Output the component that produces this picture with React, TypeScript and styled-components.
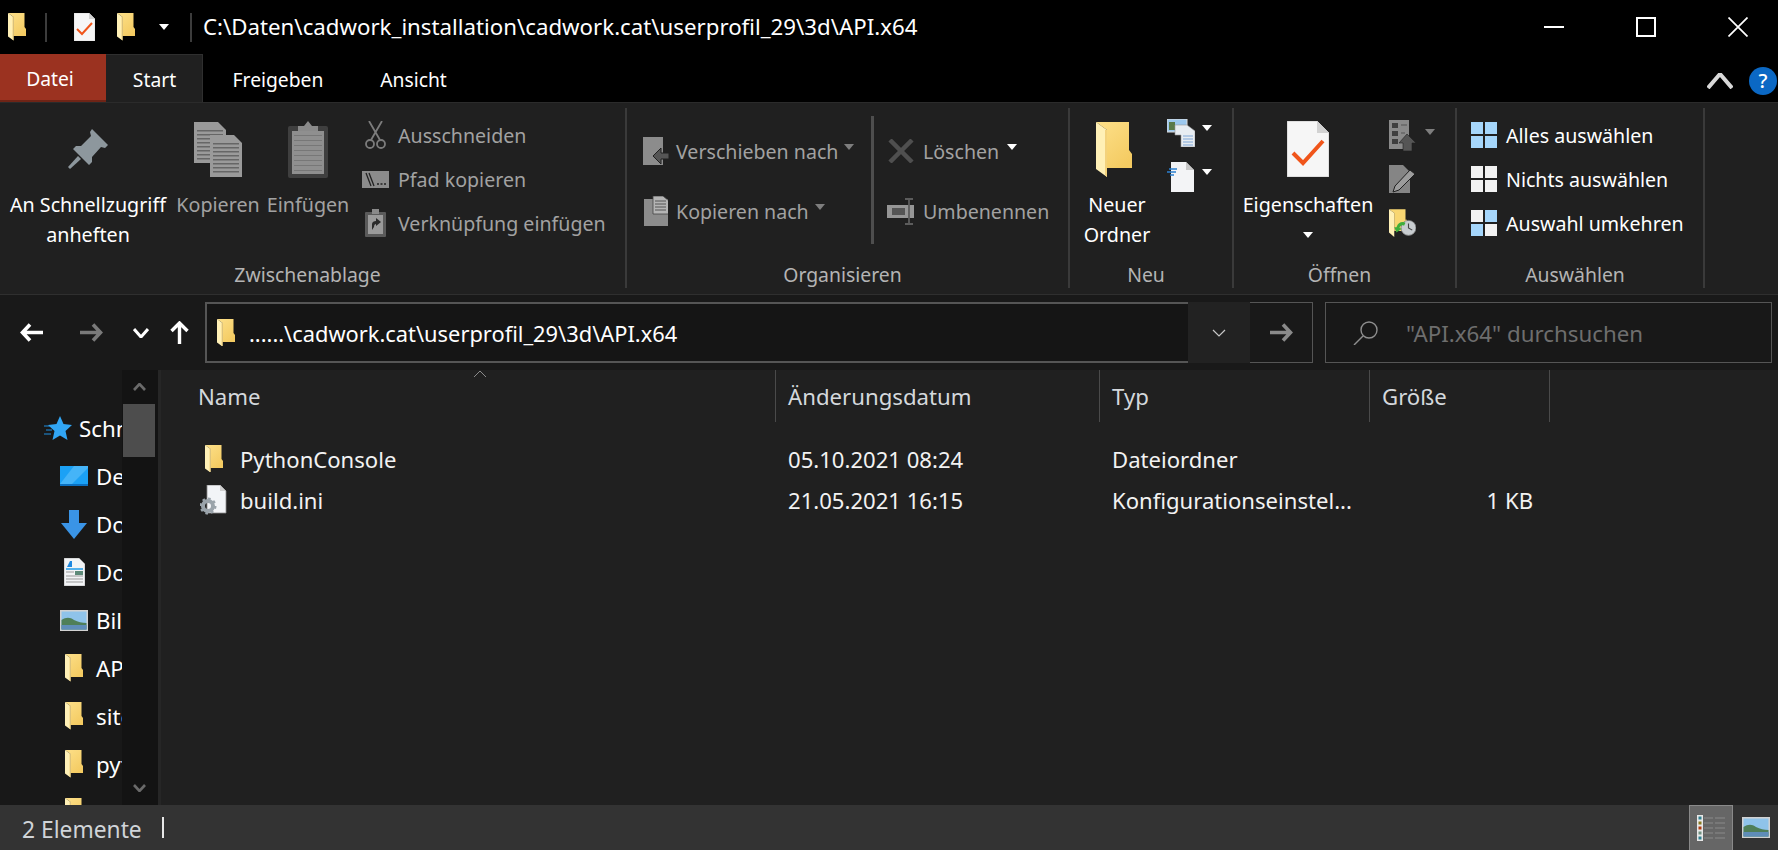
import React from 'react'
import styled, { createGlobalStyle } from 'styled-components'

const GlobalStyle = createGlobalStyle`
  html, body { margin: 0; padding: 0; background: #202020; overflow: hidden; }
  body { font-family: "Noto Sans", "Liberation Sans", sans-serif; color: #fff; }
  svg { display: block; flex-shrink: 0; }
`

const Window = styled.div`
  width: 1778px;
  height: 850px;
  display: flex;
  flex-direction: column;
  overflow: hidden;
`

/* title bar */
const TitleBar = styled.div`
  height: 54px;
  background: #000;
  display: flex;
  align-items: center;
  padding-left: 8px;
`
const QuickSep = styled.div<{ $ml: number; $mr: number }>`
  width: 2px;
  height: 29px;
  background: #3c3c3c;
  margin: 0 ${p => p.$mr}px 0 ${p => p.$ml}px;
`
const QuickSlot = styled.div<{ $w: number }>`
  width: ${p => p.$w}px;
  display: flex;
  justify-content: flex-start;
`
const TitleText = styled.div`
  font-size: 22.25px;
  white-space: nowrap;
  margin-left: 11px;
  margin-bottom: 2px;
  flex: 1;
`
const WinControls = styled.div`
  display: flex;
  align-items: center;
`
const WinButton = styled.div<{ $w: number }>`
  width: ${p => p.$w}px;
  display: flex;
  justify-content: center;
`

/* tabs */
const TabRow = styled.div`
  height: 48px;
  background: #000;
  display: flex;
  align-items: stretch;
`
const Tab = styled.div<{ $w: number; $active?: boolean; $file?: boolean }>`
  width: ${p => p.$w}px;
  box-sizing: border-box;
  display: flex;
  align-items: center;
  justify-content: center;
  font-size: 19.3px;
  padding-top: 2px;
  padding-right: ${p => (p.$file ? 6 : 0)}px;
  background: ${p => (p.$file ? '#9b3220' : p.$active ? '#202020' : 'transparent')};
  border-bottom: ${p => (p.$file ? '2px solid #6f2416' : 'none')};
  border-top: ${p => (p.$active ? '1px solid #2f2f2f' : 'none')};
  box-shadow: ${p => (p.$active ? 'inset -1px 0 0 #2f2f2f' : 'none')};
`
const TabRight = styled.div`
  margin-left: auto;
  display: flex;
  align-items: center;
  gap: 16px;
  padding-right: 1px;
  padding-top: 6px;
`
const HelpBadge = styled.div`
  width: 28px;
  height: 28px;
  border-radius: 50%;
  background: #0b68c4;
  color: #fff;
  font-size: 20px;
  font-weight: 500;
  display: flex;
  align-items: center;
  justify-content: center;
  line-height: 1;
`

/* ribbon */
const Ribbon = styled.div`
  height: 193px;
  box-sizing: border-box;
  background: #202020;
  border-top: 1px solid #2b2b2b;
  border-bottom: 1px solid #2f2f2f;
  padding: 5px 0 6px;
  display: flex;
  align-items: stretch;
`
const Group = styled.div<{ $w: number }>`
  width: ${p => p.$w}px;
  box-sizing: border-box;
  border-right: 2px solid #3a3a3a;
  padding-right: 10px;
  display: flex;
  flex-direction: column;
`
const GroupBody = styled.div<{ $pl: number }>`
  flex: 1;
  display: flex;
  align-items: flex-start;
  padding-left: ${p => p.$pl}px;
  min-height: 0;
`
const GroupLabel = styled.div`
  height: 26px;
  text-align: center;
  font-size: 19.4px;
  line-height: 26px;
  color: #b4b4b4;
`
const LargeButton = styled.div<{ $w: number; $ml?: number; $dim?: boolean }>`
  width: ${p => p.$w}px;
  margin-left: ${p => p.$ml || 0}px;
  flex-shrink: 0;
  display: flex;
  flex-direction: column;
  align-items: center;
  font-size: 19.7px;
  line-height: 30px;
  text-align: center;
  white-space: nowrap;
  color: ${p => (p.$dim ? '#a2a2a2' : '#fff')};
`
const LargeIcon = styled.div<{ $shift?: number }>`
  height: 82px;
  display: flex;
  align-items: center;
  justify-content: center;
  margin-right: ${p => p.$shift || 0}px;
`
const Stack = styled.div<{ $ml?: number; $top: number; $rowH?: number; $w?: number }>`
  margin-left: ${p => p.$ml || 0}px;
  padding-top: ${p => p.$top}px;
  width: ${p => (p.$w ? `${p.$w}px` : 'auto')};
  flex-shrink: 0;
  display: grid;
  grid-auto-rows: ${p => p.$rowH || 44}px;
`
const SmallRow = styled.div<{ $dim?: boolean }>`
  display: flex;
  align-items: center;
  font-size: 19.6px;
  white-space: nowrap;
  color: ${p => (p.$dim ? '#a2a2a2' : '#fff')};
`
const SmallIcon = styled.div<{ $w: number; $mr: number }>`
  width: ${p => p.$w}px;
  margin-right: ${p => p.$mr}px;
  display: flex;
  justify-content: center;
  flex-shrink: 0;
`
const Caret = styled.span<{ $ml?: number; $dim?: boolean; $up?: number; $down?: number }>`
  display: inline-block;
  width: 0;
  height: 0;
  margin-left: ${p => p.$ml || 0}px;
  margin-bottom: ${p => p.$up || 0}px;
  margin-top: ${p => p.$down || 0}px;
  border-left: 5px solid transparent;
  border-right: 5px solid transparent;
  border-top: 6px solid ${p => (p.$dim ? '#7e7e7e' : '#fff')};
`
const OrgDivider = styled.div`
  width: 3px;
  height: 128px;
  background: #4e4e4e;
  margin: 8px 13px 0 0;
  flex-shrink: 0;
`

/* address row */
const NavBar = styled.div`
  height: 75px;
  background: #191919;
  display: flex;
  align-items: center;
`
const NavButton = styled.div<{ $w: number }>`
  width: ${p => p.$w}px;
  display: flex;
  justify-content: center;
`
const Address = styled.div`
  margin-left: 6px;
  width: 1108px;
  height: 61px;
  display: flex;
  font-size: 21.85px;
`
const AddressField = styled.div`
  flex: 1;
  box-sizing: border-box;
  border: 2px solid #555;
  border-right: none;
  background: #151515;
  display: flex;
  align-items: center;
  gap: 14px;
  padding-left: 10px;
`
const AddressText = styled.span`
  padding-top: 1px;
`
const AddressDrop = styled.div`
  width: 62px;
  background: #222;
  display: flex;
  align-items: center;
  justify-content: center;
`
const GoButton = styled.div`
  width: 63px;
  box-sizing: border-box;
  border: 1px solid #555;
  border-left: none;
  display: flex;
  align-items: center;
  justify-content: center;
`
const SearchBox = styled.div`
  margin-left: 12px;
  width: 447px;
  height: 61px;
  box-sizing: border-box;
  border: 1px solid #555;
  background: #181818;
  display: flex;
  align-items: center;
  gap: 27px;
  padding-left: 27px;
  font-size: 22.3px;
  color: #6e6e6e;
`
const SearchText = styled.span`
  padding-top: 1px;
`

/* main */
const Main = styled.div`
  flex: 1;
  min-height: 0;
  display: flex;
`
const Sidebar = styled.div`
  width: 161px;
  box-sizing: border-box;
  background: #181818;
  border-right: 3px solid #262626;
  display: flex;
`
const Tree = styled.div`
  width: 122px;
  overflow: hidden;
  padding-top: 34px;
  box-sizing: border-box;
`
const TreeItem = styled.div<{ $indent: number }>`
  height: 48px;
  display: flex;
  align-items: center;
  gap: 8px;
  padding-left: ${p => p.$indent}px;
  font-size: 22.3px;
  white-space: nowrap;
`
const TreeIcon = styled.div`
  width: 28px;
  display: flex;
  justify-content: center;
  flex-shrink: 0;
`
const ScrollTrack = styled.div`
  flex: 1;
  background: #131313;
  display: flex;
  flex-direction: column;
  padding-right: 3px;
`
const ScrollArrow = styled.div`
  height: 34px;
  display: flex;
  align-items: center;
  justify-content: center;
  padding-left: 1px;
`
const ScrollThumb = styled.div`
  height: 53px;
  background: #4d4d4d;
  margin-left: 1px;
`
const ScrollGap = styled.div`
  flex: 1;
`
const Files = styled.div`
  flex: 1;
  background: #202020;
  min-width: 0;
`
const Columns = styled.div`
  display: grid;
  grid-template-columns: 615px 324px 270px 180px;
`
const HeaderCell = styled.div<{ $pl: number }>`
  position: relative;
  height: 52px;
  box-sizing: border-box;
  border-right: 1px solid #4a4a4a;
  padding-left: ${p => p.$pl}px;
  display: flex;
  align-items: center;
  font-size: 22.2px;
  color: #d4d8dc;
`
const SortMark = styled.div`
  position: absolute;
  left: 312px;
  top: 0;
`
const RowList = styled.div`
  padding-top: 16px;
`
const RowCell = styled.div<{ $pl?: number; $right?: boolean; $gap?: number }>`
  height: 41px;
  display: flex;
  align-items: center;
  gap: ${p => p.$gap || 17}px;
  padding-left: ${p => p.$pl || 0}px;
  padding-right: ${p => (p.$right ? 17 : 0)}px;
  justify-content: ${p => (p.$right ? 'flex-end' : 'flex-start')};
  font-size: 22.1px;
  white-space: nowrap;
  color: #f2f2f2;
`

/* status bar */
const StatusBar = styled.div`
  height: 45px;
  background: #333;
  display: flex;
  align-items: center;
  padding-left: 22px;
  font-size: 22.8px;
  color: #d0d4d8;
`
const StatusText = styled.span`
  padding-top: 3px;
`
const StatusSep = styled.div`
  width: 2px;
  height: 21px;
  background: #e8e8e8;
  margin-left: 20px;
`
const ViewDetails = styled.div`
  margin-left: auto;
  width: 44px;
  height: 45px;
  box-sizing: border-box;
  background: #666;
  border: 1px solid #8a8a8a;
  border-bottom: none;
  display: flex;
  align-items: center;
  justify-content: center;
`
const ViewThumb = styled.div`
  width: 45px;
  display: flex;
  justify-content: center;
`

/* icons */
const Folder = ({ w }: { w: number }) => (
  <svg width={w} height={w * 55 / 36} viewBox="0 0 36 55">
    <defs>
      <linearGradient id="fback" x1="0" y1="0" x2="0.7" y2="1">
        <stop offset="0" stopColor="#fde08a" />
        <stop offset="1" stopColor="#f4cb62" />
      </linearGradient>
    </defs>
    <path d="M0 0H33V28L36 32V46H11V8Z" fill="url(#fback)" />
    <path d="M0 0L11 8V55L0 47Z" fill="#fff0b6" />
    <path d="M11 8V55L9 53V8Z" fill="#f3d27c" />
  </svg>
)

const CheckDoc = ({ w }: { w: number }) => (
  <svg width={w} height={w * 56 / 42} viewBox="0 0 42 56">
    <path d="M0 0H30L42 12V56H0Z" fill="#f6f6f6" stroke="#c8c8c8" strokeWidth="1" />
    <path d="M30 0V12H42Z" fill="#d2d2d2" />
    <path d="M6 32L16 42L36 20" fill="none" stroke="#f0551a" strokeWidth="4" />
  </svg>
)

const Pin = () => (
  <svg width="40" height="40" viewBox="0 0 40 40" fill="#8d979d">
    <path d="M24 0L40 16L37 19L33 18L24 28L24 33L21 36L5 20L8 17L13 17L23 7L22 3Z" />
    <path d="M10 27L13 30L2 40L0 38Z" />
  </svg>
)

const PageLines = ({ x, y, w, h }: { x: number; y: number; w: number; h: number }) => {
  const lines = []
  for (let ly = y + 8; ly < y + h - 3; ly += 4) lines.push(<rect key={ly} x={x + 3} y={ly} width={w - 6} height="1.5" fill="#666" />)
  return (
    <g>
      <path d={`M${x} ${y}H${x + w - 8}L${x + w} ${y + 8}V${y + h}H${x}Z`} fill="#9a9a9a" />
      {lines}
    </g>
  )
}

const CopyIcon = () => (
  <svg width="48" height="55" viewBox="0 0 48 55">
    <PageLines x={0} y={0} w={32} h={41} />
    <PageLines x={16} y={13} w={32} h={42} />
  </svg>
)

const ClipboardIcon = () => (
  <svg width="40" height="57" viewBox="0 0 40 57">
    <rect x="0" y="5" width="40" height="52" rx="2" fill="#3f3f3f" />
    <rect x="4" y="10" width="32" height="43" fill="#8f8f8f" />
    {[14, 19, 24, 29, 34, 39, 44, 49].map(y => <rect key={y} x="6" y={y} width="28" height="1" fill="#777" />)}
    <path d="M20 0L24 5H30V10H10V5H16Z" fill="#8a8a8a" />
  </svg>
)

const Scissors = () => (
  <svg width="21" height="28" viewBox="0 0 21 28" fill="none" stroke="#7c7c7c" strokeWidth="1.8">
    <path d="M4 0L15 19M17 0L6 19" />
    <circle cx="5" cy="23" r="4" />
    <circle cx="16" cy="23" r="4" />
  </svg>
)

const PathIcon = () => (
  <svg width="27" height="17" viewBox="0 0 27 17">
    <rect width="27" height="17" fill="#8c8c8c" />
    <path d="M4 2L9 15M7 2L12 15" stroke="#222" strokeWidth="1.3" />
    <path d="M15 13h2M18.500 13h2M22 13h2" stroke="#222" strokeWidth="1.5" />
  </svg>
)

const LinkClip = () => (
  <svg width="21" height="28" viewBox="0 0 21 28">
    <rect y="3" width="21" height="25" rx="1" fill="#5a5a5a" />
    <rect x="3" y="6" width="15" height="19" fill="#9a9a9a" />
    <rect x="7" y="0" width="7" height="5" fill="#8a8a8a" />
    <path d="M7 21V15C7 13 9 12 11 12V9L16 13L11 17V15C10 15 9 16 9 18Z" fill="#2a2a2a" />
  </svg>
)

const MoveIcon = () => (
  <svg width="26" height="28" viewBox="0 0 26 28">
    <path d="M0 0H20V28H0Z" fill="#8c8c8c" />
    <path d="M10 19L18 11V16H26V22H18V27Z" fill="#555" stroke="#202020" strokeWidth="1" />
  </svg>
)

const CopyToIcon = () => (
  <svg width="24" height="30" viewBox="0 0 24 30">
    <path d="M0 3H24V30H0Z" fill="#8c8c8c" />
    <path d="M9 0H19L25 5V18H9Z" fill="#b5b5b5" stroke="#444" strokeWidth="0.8" />
    <path d="M11 5h11M11 8h11M11 11h11M11 14h11" stroke="#555" strokeWidth="1" />
  </svg>
)

const DeleteX = () => (
  <svg width="26" height="24" viewBox="0 0 26 24">
    <path d="M2 1L24 23M24 1L2 23" stroke="#4f4f4f" strokeWidth="4.5" />
  </svg>
)

const RenameIcon = () => (
  <svg width="28" height="27" viewBox="0 0 28 27">
    <rect x="0" y="7" width="27" height="13" fill="#969696" />
    <rect x="5" y="10" width="13" height="7" fill="#555" />
    <path d="M18 1H26M18 26H26M22 1V26" stroke="#5c5c5c" strokeWidth="1.8" fill="none" />
  </svg>
)

const ContactsIcon = () => (
  <svg width="28" height="28" viewBox="0 0 28 28">
    <rect x="0" y="0" width="20" height="13" fill="#9cc8ee" stroke="#ddd" />
    <rect x="2" y="3" width="6" height="8" fill="#5a7a4a" />
    <path d="M8 6H20L28 12V28H14V16H8Z" fill="#e8edf2" stroke="#999" strokeWidth="0.6" />
    <path d="M16 17h10M16 20h10M16 23h10M16 26h10" stroke="#7ea6d6" strokeWidth="1" />
  </svg>
)

const NewFileIcon = () => (
  <svg width="27" height="30" viewBox="0 0 27 30">
    <path d="M4 0H19L27 8V30H4Z" fill="#f3f4f6" />
    <path d="M19 0V8H27Z" fill="#c8c8c8" />
    <path d="M2 7h8M0 10h9M3 13h4" stroke="#2a7fd0" strokeWidth="1.3" />
  </svg>
)

const ChecklistUp = () => (
  <svg width="27" height="31" viewBox="0 0 27 31">
    <rect width="20" height="29" fill="#8a8a8a" />
    <rect x="3" y="3" width="6" height="5" fill="#3f3f3f" />
    <rect x="3" y="11" width="6" height="5" fill="#3f3f3f" />
    <rect x="3" y="19" width="6" height="5" fill="#3f3f3f" />
    <path d="M12 5h6M12 13h4" stroke="#555" strokeWidth="1" />
    <path d="M18 14L27 23H23V31H14V23H10Z" fill="#555" stroke="#202020" strokeWidth="0.6" />
  </svg>
)

const EditDoc = () => (
  <svg width="27" height="28" viewBox="0 0 27 28">
    <path d="M0 0H14L21 7V28H0Z" fill="#858585" />
    <path d="M6 21L21 5L26 9L10 25L4 27Z" fill="#9c9c9c" stroke="#202020" strokeWidth="1" />
  </svg>
)

const HistoryFolder = () => (
  <svg width="27" height="28" viewBox="0 0 36 37">
    <path d="M0 0H22V14H24V29H7V5Z" fill="#f8d672" />
    <path d="M0 0L7 5V37L0 31Z" fill="#fff0b6" />
    <circle cx="26" cy="25" r="10" fill="#c8cdd0" stroke="#777" strokeWidth="1" />
    <path d="M26 19V25L31 28" stroke="#444" strokeWidth="1.5" fill="none" />
    <path d="M10 24C12 18 17 16 22 18L20 22C17 21 15 22 14 25L17 26L10 31L7 24Z" fill="#3fae3a" />
  </svg>
)

const Grid4 = ({ a, b, c, d }: { a: string; b: string; c: string; d: string }) => (
  <svg width="26" height="26" viewBox="0 0 26 26">
    <rect x="0" y="0" width="12" height="12" fill={a} />
    <rect x="14" y="0" width="12" height="12" fill={b} />
    <rect x="0" y="14" width="12" height="12" fill={c} />
    <rect x="14" y="14" width="12" height="12" fill={d} />
  </svg>
)
const BLUE = '#a5d6fb'
const WHITE = '#f2f2f2'

const Arrow = ({ color, right }: { color: string; right?: boolean }) => (
  <svg width="23" height="19" viewBox="0 0 23 19">
    <path
      d={right ? 'M13 1.500L20.500 9.500L13 17.500M20 9.500H0' : 'M10 1.500L2.500 9.500L10 17.500M3 9.500H23'}
      fill="none"
      stroke={color}
      strokeWidth="3.6"
    />
  </svg>
)

const Chevron = ({ w, h, color, sw, up }: { w: number; h: number; color: string; sw: number; up?: boolean }) => (
  <svg width={w} height={h} viewBox={`0 0 ${w} ${h}`}>
    <path
      d={up ? `M1 ${h - 1}L${w / 2} 1L${w - 1} ${h - 1}` : `M1 1L${w / 2} ${h - 1}L${w - 1} 1`}
      fill="none"
      stroke={color}
      strokeWidth={sw}
    />
  </svg>
)

const Star = () => (
  <svg width="30" height="26" viewBox="0 0 30 26">
    <path d="M2 11h7M4 15h6M2 19h7" stroke="#1f8fe0" strokeWidth="1" />
    <path d="M18 1L21.500 9L30 10L23.500 16L25.500 25L18 20.500L10.500 25L12.500 16L6 10L14.500 9Z" fill="#31a6f5" />
  </svg>
)
const DesktopIcon = () => (
  <svg width="28" height="20" viewBox="0 0 28 20">
    <rect width="28" height="20" fill="#1ba1f5" />
    <path d="M14 0H28V2L12 18H0L14 0Z" fill="#45b4f8" />
    <path d="M0 18H28V20H0Z" fill="#0a6fc0" />
  </svg>
)
const DownloadIcon = () => (
  <svg width="26" height="29" viewBox="0 0 26 29">
    <path d="M8 0H18V13H26L13 29L0 13H8Z" fill="#3a94e6" />
  </svg>
)
const DocsIcon = () => (
  <svg width="21" height="28" viewBox="0 0 21 28">
    <path d="M0 0H15L21 6V28H0Z" fill="#f2f4f6" stroke="#999" strokeWidth="0.6" />
    <path d="M3 9L6 3H8V9Z" fill="#1e88e0" />
    <path d="M2 11H19" stroke="#1e9be8" strokeWidth="1.5" />
    <path d="M2 14H10M2 18H19M2 21H19M2 24H19" stroke="#999" strokeWidth="1" />
    <rect x="11" y="13" width="8" height="4" fill="#5d8a78" />
  </svg>
)
const PictureIcon = ({ w, h }: { w: number; h: number }) => (
  <svg width={w} height={h} viewBox="0 0 28 21">
    <rect width="28" height="21" fill="#d2d2d2" />
    <rect x="1.500" y="1.500" width="25" height="18" fill="#8fc3ea" />
    <path d="M1.500 10C6 7 10 7 14 10C18 12 22 13 26.500 13V19.500H1.500Z" fill="#4f7f58" />
    <path d="M1.500 15H26.500V19.500H1.500Z" fill="#5f8db8" />
  </svg>
)
const IniIcon = () => (
  <svg width="27" height="30" viewBox="0 0 27 30">
    <path d="M7 0H20L26 6V28H7Z" fill="#f2f4f7" stroke="#8a8a8a" strokeWidth="0.8" />
    <path d="M20 0V6H26Z" fill="#cfcfcf" />
    <circle cx="8" cy="21" r="5" fill="none" stroke="#9aa3aa" strokeWidth="4" />
    <circle cx="8" cy="21" r="7.300" fill="none" stroke="#9aa3aa" strokeWidth="2.400" strokeDasharray="2.600 3.100" />
  </svg>
)
const SearchGlass = () => (
  <svg width="26" height="24" viewBox="0 0 26 24" fill="none" stroke="#8e8e8e" strokeWidth="1.400">
    <circle cx="16" cy="9" r="8" />
    <path d="M10 15L1 24" />
  </svg>
)
const DetailsGlyph = () => (
  <svg width="28" height="26" viewBox="0 0 28 26">
    <rect width="6" height="26" fill="#e8e8e8" />
    {[['#2f7f8f', 1.500], ['#8a7a20', 6.500], ['#b03a10', 11.500], ['#6f9080', 16.500], ['#2f7f8f', 21.500]].map(([c, y]) => (
      <rect key={String(y)} x="1.500" y={Number(y)} width="3" height="3" fill={String(c)} />
    ))}
    {[3, 8, 13, 18, 23].map(y => (
      <path key={y} d={`M7 ${y}H16M18 ${y}H28`} stroke="#8a8a8a" strokeWidth="1" />
    ))}
  </svg>
)

const treeItems = [
  { label: 'Schnellzugriff', icon: <Star />, indent: 43 },
  { label: 'Desktop', icon: <DesktopIcon />, indent: 60 },
  { label: 'Downloads', icon: <DownloadIcon />, indent: 60 },
  { label: 'Dokumente', icon: <DocsIcon />, indent: 60 },
  { label: 'Bilder', icon: <PictureIcon w={28} h={21} />, indent: 60 },
  { label: 'API.x64', icon: <Folder w={18} />, indent: 60 },
  { label: 'site-packages', icon: <Folder w={18} />, indent: 60 },
  { label: 'python', icon: <Folder w={18} />, indent: 60 },
  { label: 'userprofil_29', icon: <Folder w={18} />, indent: 60 },
]

const App = () => (
  <Window>
    <GlobalStyle />
    <TitleBar>
      <Folder w={18} />
      <QuickSep $ml={19} $mr={27} />
      <QuickSlot $w={43}><CheckDoc w={21} /></QuickSlot>
      <QuickSlot $w={42}><Folder w={18} /></QuickSlot>
      <Caret />
      <QuickSep $ml={21} $mr={0} />
      <TitleText>C:\Daten\cadwork_installation\cadwork.cat\userprofil_29\3d\API.x64</TitleText>
      <WinControls>
        <WinButton $w={78}>
          <svg width="20" height="2" viewBox="0 0 20 2"><rect width="20" height="2" fill="#fff" /></svg>
        </WinButton>
        <WinButton $w={105}>
          <svg width="20" height="20" viewBox="0 0 20 20"><rect x="1" y="1" width="18" height="18" fill="none" stroke="#fff" strokeWidth="2" /></svg>
        </WinButton>
        <WinButton $w={80}>
          <svg width="20" height="20" viewBox="0 0 20 20"><path d="M0.500 0.500L19.500 19.500M19.500 0.500L0.500 19.500" stroke="#fff" strokeWidth="1.700" /></svg>
        </WinButton>
      </WinControls>
    </TitleBar>

    <TabRow>
      <Tab $w={106} $file>Datei</Tab>
      <Tab $w={97} $active>Start</Tab>
      <Tab $w={150}>Freigeben</Tab>
      <Tab $w={121}>Ansicht</Tab>
      <TabRight>
        <Chevron w={26} h={16} color="#d8d8d8" sw={4} up />
        <HelpBadge>?</HelpBadge>
      </TabRight>
    </TabRow>

    <Ribbon>
      <Group $w={627}>
        <GroupBody $pl={8}>
          <LargeButton $w={160}>
            <LargeIcon><Pin /></LargeIcon>
            An Schnellzugriff
            <br />
            anheften
          </LargeButton>
          <LargeButton $w={80} $ml={10} $dim>
            <LargeIcon><CopyIcon /></LargeIcon>
            Kopieren
          </LargeButton>
          <LargeButton $w={80} $ml={10} $dim>
            <LargeIcon><ClipboardIcon /></LargeIcon>
            Einfügen
          </LargeButton>
          <Stack $ml={14} $top={5}>
            <SmallRow $dim><SmallIcon $w={27} $mr={9}><Scissors /></SmallIcon>Ausschneiden</SmallRow>
            <SmallRow $dim><SmallIcon $w={27} $mr={9}><PathIcon /></SmallIcon>Pfad kopieren</SmallRow>
            <SmallRow $dim><SmallIcon $w={27} $mr={9}><LinkClip /></SmallIcon>Verknüpfung einfügen</SmallRow>
          </Stack>
        </GroupBody>
        <GroupLabel>Zwischenablage</GroupLabel>
      </Group>

      <Group $w={443}>
        <GroupBody $pl={16}>
          <Stack $top={13} $rowH={60} $w={228}>
            <SmallRow $dim><SmallIcon $w={26} $mr={7}><MoveIcon /></SmallIcon>Verschieben nach<Caret $ml={6} $dim $up={8} /></SmallRow>
            <SmallRow $dim><SmallIcon $w={26} $mr={7}><CopyToIcon /></SmallIcon>Kopieren nach<Caret $ml={6} $dim $up={8} /></SmallRow>
          </Stack>
          <OrgDivider />
          <Stack $top={13} $rowH={60}>
            <SmallRow $dim><SmallIcon $w={28} $mr={8}><DeleteX /></SmallIcon>Löschen<Caret $ml={8} $up={8} /></SmallRow>
            <SmallRow $dim><SmallIcon $w={28} $mr={8}><RenameIcon /></SmallIcon>Umbenennen</SmallRow>
          </Stack>
        </GroupBody>
        <GroupLabel>Organisieren</GroupLabel>
      </Group>

      <Group $w={164}>
        <GroupBody $pl={12}>
          <LargeButton $w={70}>
            <LargeIcon $shift={6}><Folder w={36} /></LargeIcon>
            Neuer
            <br />
            Ordner
          </LargeButton>
          <Stack $ml={15} $top={3}>
            <SmallRow><ContactsIcon /><Caret $ml={7} $up={10} /></SmallRow>
            <SmallRow><NewFileIcon /><Caret $ml={8} $up={10} /></SmallRow>
          </Stack>
        </GroupBody>
        <GroupLabel>Neu</GroupLabel>
      </Group>

      <Group $w={223}>
        <GroupBody $pl={9}>
          <LargeButton $w={130}>
            <LargeIcon><CheckDoc w={42} /></LargeIcon>
            Eigenschaften
            <Caret $down={12} />
          </LargeButton>
          <Stack $ml={16} $top={5}>
            <SmallRow><ChecklistUp /><Caret $ml={9} $dim $up={6} /></SmallRow>
            <SmallRow><EditDoc /></SmallRow>
            <SmallRow><HistoryFolder /></SmallRow>
          </Stack>
        </GroupBody>
        <GroupLabel>Öffnen</GroupLabel>
      </Group>

      <Group $w={248}>
        <GroupBody $pl={14}>
          <Stack $top={5}>
            <SmallRow><SmallIcon $w={26} $mr={9}><Grid4 a={BLUE} b={BLUE} c={BLUE} d={BLUE} /></SmallIcon>Alles auswählen</SmallRow>
            <SmallRow><SmallIcon $w={26} $mr={9}><Grid4 a={WHITE} b={WHITE} c={WHITE} d={WHITE} /></SmallIcon>Nichts auswählen</SmallRow>
            <SmallRow><SmallIcon $w={26} $mr={9}><Grid4 a={WHITE} b={BLUE} c={BLUE} d={WHITE} /></SmallIcon>Auswahl umkehren</SmallRow>
          </Stack>
        </GroupBody>
        <GroupLabel>Auswählen</GroupLabel>
      </Group>
    </Ribbon>

    <NavBar>
      <NavButton $w={62}><Arrow color="#fff" /></NavButton>
      <NavButton $w={59}><Arrow color="#7a7a7a" right /></NavButton>
      <NavButton $w={39}><Chevron w={16} h={10} color="#fff" sw={3} /></NavButton>
      <NavButton $w={39}>
        <svg width="19" height="23" viewBox="0 0 19 23"><path d="M1.500 10L9.500 2L17.500 10M9.500 2.500V23" fill="none" stroke="#fff" strokeWidth="3.400" /></svg>
      </NavButton>
      <Address>
        <AddressField>
          <Folder w={18} />
          <AddressText>......\cadwork.cat\userprofil_29\3d\API.x64</AddressText>
        </AddressField>
        <AddressDrop><Chevron w={14} h={8} color="#c8c8c8" sw={1.2} /></AddressDrop>
        <GoButton><Arrow color="#8a8a8a" right /></GoButton>
      </Address>
      <SearchBox>
        <SearchGlass />
        <SearchText>"API.x64" durchsuchen</SearchText>
      </SearchBox>
    </NavBar>

    <Main>
      <Sidebar>
        <Tree>
          {treeItems.map(item => (
            <TreeItem key={item.label} $indent={item.indent}>
              <TreeIcon>{item.icon}</TreeIcon>
              {item.label}
            </TreeItem>
          ))}
        </Tree>
        <ScrollTrack>
          <ScrollArrow><Chevron w={13} h={8} color="#6a6a6a" sw={2.6} up /></ScrollArrow>
          <ScrollThumb />
          <ScrollGap />
          <ScrollArrow><Chevron w={13} h={8} color="#6a6a6a" sw={2.6} /></ScrollArrow>
        </ScrollTrack>
      </Sidebar>
      <Files>
        <Columns>
          <HeaderCell $pl={37}>
            Name
            <SortMark><Chevron w={14} h={8} color="#8a8a8a" sw={1} up /></SortMark>
          </HeaderCell>
          <HeaderCell $pl={12}>Änderungsdatum</HeaderCell>
          <HeaderCell $pl={12}>Typ</HeaderCell>
          <HeaderCell $pl={12}>Größe</HeaderCell>
        </Columns>
        <RowList>
          <Columns>
            <RowCell $pl={44}><Folder w={18} />PythonConsole</RowCell>
            <RowCell $pl={12}>05.10.2021 08:24</RowCell>
            <RowCell $pl={12}>Dateiordner</RowCell>
            <RowCell $right />
          </Columns>
          <Columns>
            <RowCell $pl={39} $gap={13}><IniIcon />build.ini</RowCell>
            <RowCell $pl={12}>21.05.2021 16:15</RowCell>
            <RowCell $pl={12}>Konfigurationseinstel...</RowCell>
            <RowCell $right>1 KB</RowCell>
          </Columns>
        </RowList>
      </Files>
    </Main>

    <StatusBar>
      <StatusText>2 Elemente</StatusText>
      <StatusSep />
      <ViewDetails><DetailsGlyph /></ViewDetails>
      <ViewThumb><PictureIcon w={28} h={21} /></ViewThumb>
    </StatusBar>
  </Window>
)

export default App
